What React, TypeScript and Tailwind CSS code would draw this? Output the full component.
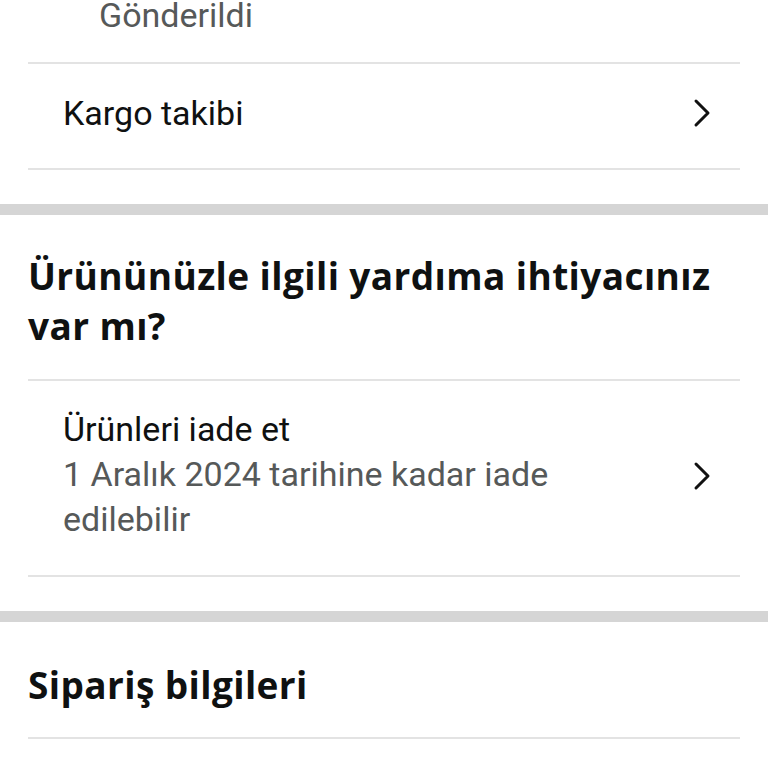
import { ReactNode } from 'react';

function Chevron() {
  return (
    <svg width="20" height="30" viewBox="0 0 20 30" className="shrink-0 text-[#111]">
      <polyline points="4,3 16,15 4,27" fill="none" stroke="currentColor" strokeWidth="3" strokeLinecap="round" strokeLinejoin="round" />
    </svg>
  );
}

function Row({ children, className }: { children: ReactNode; className?: string }) {
  return (
    <div className={`mx-[28px] flex items-center justify-between border-b-2 border-[#e3e3e3] pl-[35px] pr-[28px] ${className ?? ''}`}>
      {children}
    </div>
  );
}

export default function App() {
  return (
    <div className="min-h-[768px] overflow-hidden bg-white font-['Roboto',sans-serif] text-[#0f1111]">
      {/* shipment status, cut off at top */}
      <div className="mx-[28px] -mt-[7px] h-[71px] border-b-2 border-[#e3e3e3] pl-[71px]">
        <p className="text-[34px] leading-[44px] text-[#565959]">Gönderildi</p>
      </div>

      <Row className="h-[106px] pb-[6px]">
        <span className="text-[34px] leading-[44px]">Kargo takibi</span>
        <Chevron />
      </Row>

      <div className="mt-[34px] h-[11px] bg-[#d5d5d5]" />

      <section>
        <h2 className="mx-[28px] border-b-2 border-[#e3e3e3] pt-[36px] pb-[28px] font-['Open_Sans',sans-serif] text-[37px] font-bold leading-[50px] tracking-[0.4px]">
          Ürününüzle ilgili yardıma ihtiyacınız var mı?
        </h2>
        <Row className="h-[196px] pb-[4px]">
          <div className="-mt-[4px]">
            <p className="text-[34px] leading-[45px]">Ürünleri iade et</p>
            <p className="text-[34px] leading-[45px] text-[#565959]">
              1 Aralık 2024 tarihine kadar iade
              <br />
              edilebilir
            </p>
          </div>
          <Chevron />
        </Row>
      </section>

      <div className="mt-[34px] h-[11px] bg-[#d5d5d5]" />

      <h2 className="mx-[28px] h-[117px] border-b-2 border-[#e3e3e3] pt-[38px] font-['Open_Sans',sans-serif] text-[37px] font-bold leading-[50px] tracking-[0.4px]">
        Sipariş bilgileri
      </h2>
    </div>
  );
}
